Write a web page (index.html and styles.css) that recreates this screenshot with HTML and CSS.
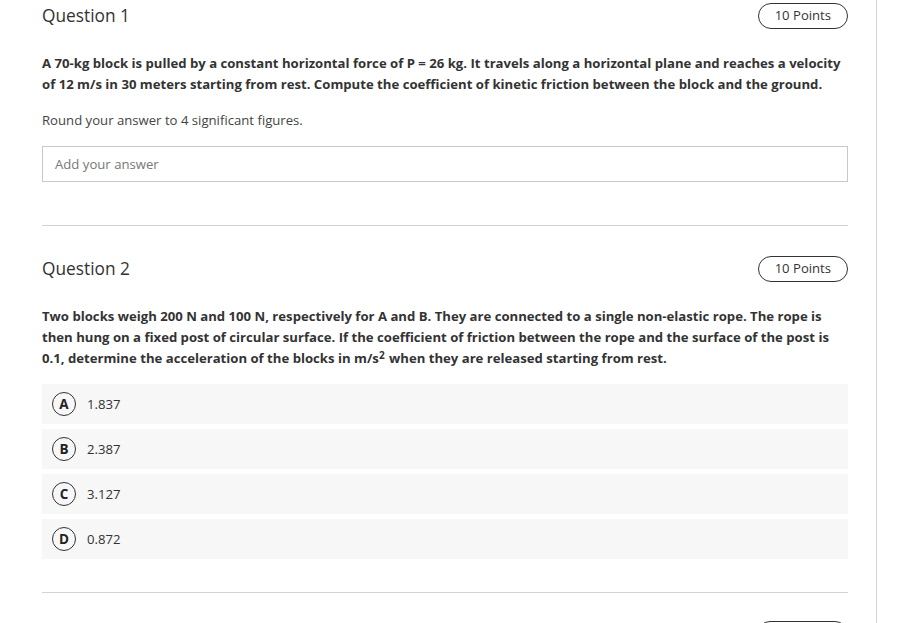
FILE: index.html
```html
<!DOCTYPE html>
<html>
<head>
<meta charset="utf-8">
<link rel="stylesheet" href="styles.css">
</head>
<body>
<div class="page">
  <main class="main">
    <section class="question">
      <div class="q-head">
        <h2 class="q-title">Question 1</h2>
        <span class="points">10 Points</span>
      </div>
      <p class="q-text">A 70-kg block is pulled by a constant horizontal force of P = 26 kg. It travels along a horizontal plane and reaches a velocity of 12 m/s in 30 meters starting from rest. Compute the coefficient of kinetic friction between the block and the ground.</p>
      <p class="q-note">Round your answer to 4 significant figures.</p>
      <div class="answer">Add your answer</div>
    </section>
    <hr class="divider divider-1">
    <section class="question">
      <div class="q-head">
        <h2 class="q-title">Question 2</h2>
        <span class="points">10 Points</span>
      </div>
      <p class="q-text q-text-2">Two blocks weigh 200 N and 100 N, respectively for A and B. They are connected to a single non-elastic rope. The rope is then hung on a fixed post of circular surface. If the coefficient of friction between the rope and the surface of the post is 0.1, determine the acceleration of the blocks in m/s<sup class="sup">2</sup> when they are released starting from rest.</p>
      <div class="options">
        <div class="option"><span class="letter">A</span><span class="value">1.837</span></div>
        <div class="option"><span class="letter">B</span><span class="value">2.387</span></div>
        <div class="option"><span class="letter">C</span><span class="value">3.127</span></div>
        <div class="option"><span class="letter">D</span><span class="value">0.872</span></div>
      </div>
    </section>
    <hr class="divider divider-2">
    <section class="question">
      <div class="q-head">
        <span class="q-title"></span>
        <span class="points points-empty"></span>
      </div>
    </section>
  </main>
</div>
</body>
</html>
```
FILE: styles.css
```css
html, body {
  margin: 0;
  padding: 0;
  background: #fff;
  height: 623px;
  overflow: hidden;
}
body {
  font-family: "Open Sans", "Noto Sans", sans-serif;
  color: #333;
}
.page {
  display: flex;
  height: 623px;
}
.main {
  width: 806px;
  padding: 3px 28px 0 42px;
  border-right: 1px solid #d4d4d4;
  height: 623px;
  box-sizing: content-box;
  overflow: hidden;
}
.q-head {
  display: flex;
  justify-content: space-between;
  align-items: center;
  height: 26px;
}
.q-title {
  margin: 0;
  font-size: 17.3px;
  font-weight: 400;
  color: #333;
  line-height: 26px;
}
.points {
  display: inline-flex;
  align-items: center;
  justify-content: center;
  height: 24px;
  padding: 0 16px;
  border: 1px solid #333;
  border-radius: 14px;
  font-size: 13.1px;
  color: #333;
  line-height: 1;
}
.q-text {
  margin: 24px 0 0;
  font-size: 13.15px;
  font-weight: 700;
  line-height: 21px;
  color: #333;
}
.q-text-2 {
  margin-top: 24px;
}
.sup {
  display: inline-block;
  font-size: 10px;
  line-height: 10px;
  vertical-align: 4px;
  margin-right: 1px;
}
.q-note {
  margin: 15px 0 0;
  font-size: 13.15px;
  line-height: 21px;
  color: #444;
}
.answer {
  margin-top: 15px;
  height: 34px;
  border: 1px solid #c8c8c8;
  display: flex;
  align-items: center;
  padding-left: 12px;
  font-size: 13.15px;
  color: #777;
}
.divider {
  border: 0;
  border-top: 1px solid #d2d2d2;
  margin: 0;
}
.divider-1 {
  margin-top: 43px;
  margin-bottom: 30px;
}
.divider-2 {
  margin-top: 33px;
  margin-bottom: 28px;
}
.options {
  margin-top: 15px;
  display: flex;
  flex-direction: column;
  gap: 5px;
}
.option {
  height: 40px;
  background: #f7f7f7;
  display: flex;
  align-items: center;
  padding-left: 10px;
  gap: 11px;
}
.letter {
  width: 22px;
  height: 22px;
  border: 1px solid #333;
  border-radius: 50%;
  display: inline-flex;
  align-items: center;
  justify-content: center;
  font-size: 13.5px;
  font-weight: 700;
  color: #222;
}
.value {
  font-size: 13.15px;
  color: #333;
}
.points-empty {
  width: 91px;
  padding: 0;
  box-sizing: border-box;
  height: 26px;
}
```
